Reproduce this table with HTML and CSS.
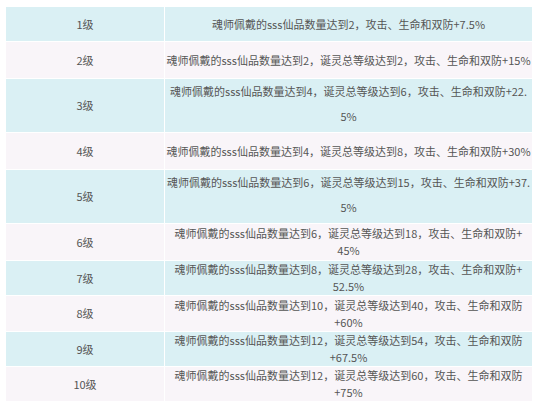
FILE: index.html
```html
<!DOCTYPE html>
<html lang="zh-CN">
<head>
<meta charset="utf-8">
<link rel="stylesheet" href="styles.css">
</head>
<body>
<table class="lv">
  <tr class="blue h35"><td class="c1">1级</td><td class="c2">魂师佩戴的sss仙品数量达到2，攻击、生命和双防+7.5%</td></tr>
  <tr class="pink h37"><td class="c1">2级</td><td class="c2">魂师佩戴的sss仙品数量达到2，诞灵总等级达到2，攻击、生命和双防+15%</td></tr>
  <tr class="blue h54 tall"><td class="c1">3级</td><td class="c2">魂师佩戴的sss仙品数量达到4，诞灵总等级达到6，攻击、生命和双防+22.<br>5%</td></tr>
  <tr class="pink h37"><td class="c1">4级</td><td class="c2">魂师佩戴的sss仙品数量达到4，诞灵总等级达到8，攻击、生命和双防+30%</td></tr>
  <tr class="blue h54 tall"><td class="c1">5级</td><td class="c2">魂师佩戴的sss仙品数量达到6，诞灵总等级达到15，攻击、生命和双防+37.<br>5%</td></tr>
  <tr class="pink h37"><td class="c1">6级</td><td class="c2">魂师佩戴的sss仙品数量达到6，诞灵总等级达到18，攻击、生命和双防+<br>45%</td></tr>
  <tr class="blue h35"><td class="c1">7级</td><td class="c2">魂师佩戴的sss仙品数量达到8，诞灵总等级达到28，攻击、生命和双防+<br>52.5%</td></tr>
  <tr class="pink h36"><td class="c1">8级</td><td class="c2">魂师佩戴的sss仙品数量达到10，诞灵总等级达到40，攻击、生命和双防<br>+60%</td></tr>
  <tr class="blue h35"><td class="c1">9级</td><td class="c2">魂师佩戴的sss仙品数量达到12，诞灵总等级达到54，攻击、生命和双防<br>+67.5%</td></tr>
  <tr class="pink h34"><td class="c1">10级</td><td class="c2">魂师佩戴的sss仙品数量达到12，诞灵总等级达到60，攻击、生命和双防<br>+75%</td></tr>
</table>
</body>
</html>
```
FILE: styles.css
```css
html, body {
  margin: 0;
  padding: 0;
  background: #ffffff;
}
body {
  font-family: "Noto Sans CJK SC", "Noto Sans", sans-serif;
  font-size: 11px;
  color: #555555;
}
.lv {
  margin: 6px 0 0 5px;
  width: 528px;
  border-collapse: collapse;
  table-layout: fixed;
}
.lv td {
  border: 1px solid #ffffff;
  padding: 0 1px;
  text-align: center;
  vertical-align: middle;
  line-height: 17px;
}
.lv .c1 { width: 156px; }
.lv .c2 { white-space: nowrap; }
.lv .tall td { line-height: 25px; }
.lv .tall .c2 { padding-bottom: 3px; }
.blue td { background: #daf0f4; }
.pink td { background: #f9f5f9; }
.h34 { height: 34px; }
.h35 { height: 35px; }
.h36 { height: 36px; }
.h37 { height: 37px; }
.h54 { height: 53px; }
```
